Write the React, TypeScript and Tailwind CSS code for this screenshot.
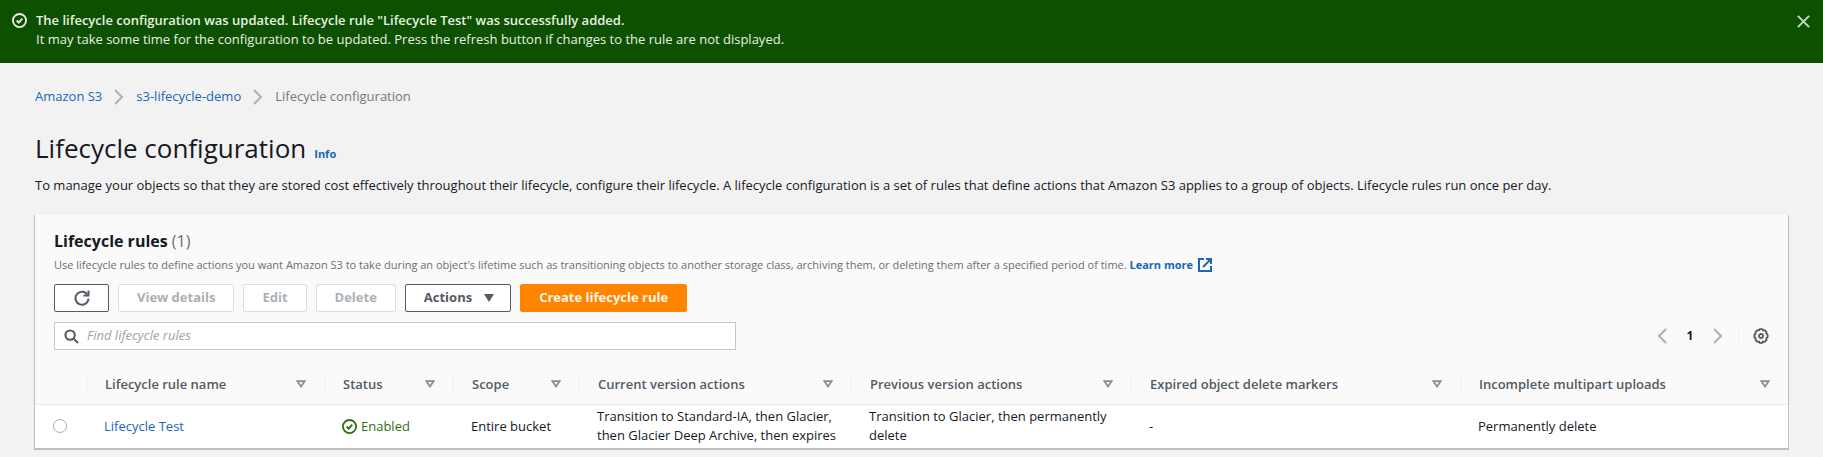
import React from "react";

type IconProps = { className?: string };

function CheckCircle({ className }: IconProps) {
  return (
    <svg viewBox="0 0 16 16" fill="none" stroke="currentColor" strokeWidth="2" className={className} aria-hidden="true">
      <circle cx="8" cy="8" r="7" />
      <path d="m5 8 2.2 2.2L11 6" />
    </svg>
  );
}

function Chevron({ className }: IconProps) {
  return (
    <svg viewBox="0 0 16 16" fill="none" stroke="currentColor" strokeWidth="2" className={className} aria-hidden="true">
      <path d="m4 1 7 7-7 7" />
    </svg>
  );
}

function CloseIcon({ className }: IconProps) {
  return (
    <svg viewBox="0 0 16 16" fill="none" stroke="currentColor" strokeWidth="2" className={className} aria-hidden="true">
      <path d="m2 2 12 12M14 2 2 14" />
    </svg>
  );
}

function RefreshIcon({ className }: IconProps) {
  return (
    <svg viewBox="0 0 16 16" fill="none" stroke="currentColor" strokeWidth="2" className={className} aria-hidden="true">
      <path d="M9.5 5.5h5V.5" />
      <path d="M14.5 8.5a6.5 6.5 0 1 1-1.2-4" />
    </svg>
  );
}

function SearchIcon({ className }: IconProps) {
  return (
    <svg viewBox="0 0 16 16" fill="none" stroke="currentColor" strokeWidth="2.2" className={className} aria-hidden="true">
      <circle cx="6.5" cy="6.5" r="5" />
      <path d="m15 15-5-5" />
    </svg>
  );
}

function ExternalIcon({ className }: IconProps) {
  return (
    <svg viewBox="0 0 16 16" fill="none" stroke="currentColor" strokeWidth="2" className={className} aria-hidden="true">
      <path d="M9 2h5v5" />
      <path d="m6 10 8-8" />
      <path d="M14 9v5H2V2h5" />
    </svg>
  );
}

function GearIcon({ className }: IconProps) {
  return (
    <svg viewBox="0 0 16 16" fill="none" stroke="currentColor" strokeLinejoin="round" className={className} aria-hidden="true">
      <path
        strokeWidth="1.8"
        d="M6.6 1.2h2.8l.6 1.2 1.6-.3 2 2-.4 1.5 1.4.9v2.9l-1.4.9.4 1.6-2 2-1.6-.4-.6 1.3H6.6L6 13.5l-1.6.4-2-2 .4-1.6-1.4-.9V6.5l1.4-.9-.4-1.5 2-2 1.6.3z"
      />
      <circle cx="8" cy="8" r="2" strokeWidth="1.8" />
    </svg>
  );
}

function SortIcon({ className }: IconProps) {
  return (
    <svg viewBox="0 0 10 8" fill="none" stroke="currentColor" strokeWidth="1.8" className={className} aria-hidden="true">
      <path d="M1.3 1.1h7.4L5 6.5z" />
    </svg>
  );
}

const columns = [
  { label: "Lifecycle rule name", width: "w-[238px]" },
  { label: "Status", width: "w-[129px]" },
  { label: "Scope", width: "w-[126px]" },
  { label: "Current version actions", width: "w-[272px]" },
  { label: "Previous version actions", width: "w-[280px]" },
  { label: "Expired object delete markers", width: "w-[329px]" },
  { label: "Incomplete multipart uploads", width: "" },
];

const buttonBase = "flex h-7 items-center justify-center rounded-xs border font-bold";

export default function App() {
  return (
    <div className="min-h-screen bg-[#f2f2f2] pb-2 font-['Open_Sans','Noto_Sans',sans-serif] text-[13px] text-[#16191f]">
      <div role="status" className="flex items-start bg-[#0d5000] px-3 pt-[11px] pb-[14px] leading-[19px] text-[#e8f0e4]">
        <CheckCircle className="mt-[2px] mr-[9px] size-[15px] shrink-0" />
        <div className="flex-1">
          <div className="font-semibold">
            The lifecycle configuration was updated. Lifecycle rule "Lifecycle Test" was successfully added.
          </div>
          <div>
            It may take some time for the configuration to be updated. Press the refresh button if changes to the rule
            are not displayed.
          </div>
        </div>
        <button type="button" aria-label="Dismiss" className="mt-[3px]">
          <CloseIcon className="size-[15px] text-[#c5dcc0]" />
        </button>
      </div>

      <main className="px-[35px]">
        <nav aria-label="Breadcrumbs" className="mt-6 flex h-5 items-center">
          <a href="#s3" className="text-[#1a66b8]">Amazon S3</a>
          <Chevron className="mx-[9px] size-4 text-[#aab0b3]" />
          <a href="#bucket" className="text-[#1a66b8]">s3-lifecycle-demo</a>
          <Chevron className="mx-[9px] size-4 text-[#aab0b3]" />
          <span className="text-[#75797c]">Lifecycle configuration</span>
        </nav>

        <div className="mt-[23px] flex items-baseline gap-2">
          <h1 className="text-[26px] leading-9">Lifecycle configuration</h1>
          <a href="#info" className="text-[11px] font-bold text-[#1a66b8]">Info</a>
        </div>
        <p className="mt-[9px] leading-5">
          To manage your objects so that they are stored cost effectively throughout their lifecycle, configure their
          lifecycle. A lifecycle configuration is a set of rules that define actions that Amazon S3 applies to a group
          of objects. Lifecycle rules run once per day.
        </p>

        <section className="-mx-px mt-5 border-r border-b-2 border-l border-[#bcbebf] bg-[#fafafa]">
          <div className="px-[19px] pt-[14px]">
            <h2 className="text-base leading-6 font-bold">
              Lifecycle rules <span className="font-normal text-[#687078]">(1)</span>
            </h2>
            <p className="mt-[2px] flex items-center text-[11px] leading-5 text-[#6b6f73]">
              <span>
                Use lifecycle rules to define actions you want Amazon S3 to take during an object's lifetime such as
                transitioning objects to another storage class, archiving them, or deleting them after a specified
                period of time.{" "}
                <a href="#learn" className="font-bold text-[#1a66b8]">Learn more</a>
              </span>
              <ExternalIcon className="ml-1 size-4 text-[#1a66b8]" />
            </p>

            <div className="mt-[9px] flex gap-[9px] text-[#545b64]">
              <button type="button" aria-label="Refresh" className={`${buttonBase} w-[55px] border-[#545b64] bg-white`}>
                <RefreshIcon className="size-4" />
              </button>
              <button type="button" disabled className={`${buttonBase} border-[#dcdedf] bg-white px-[18px] text-[#aab0b3]`}>View details</button>
              <button type="button" disabled className={`${buttonBase} border-[#dcdedf] bg-white px-[18px] text-[#aab0b3]`}>Edit</button>
              <button type="button" disabled className={`${buttonBase} border-[#dcdedf] bg-white px-[18px] text-[#aab0b3]`}>Delete</button>
              <button type="button" className={`${buttonBase} gap-3 border-[#545b64] bg-white pr-4 pl-[18px]`}>
                Actions
                <svg viewBox="0 0 10 8" className="h-2 w-[10px]" fill="currentColor" aria-hidden="true">
                  <path d="M0 0h10L5 8z" />
                </svg>
              </button>
              <button type="button" className={`${buttonBase} border-[#ff8400] bg-[#ff8400] px-[18px] text-[#fff6e8]`}>Create lifecycle rule</button>
            </div>

            <div className="mt-[10px] flex items-center justify-between">
              <label className="flex h-7 w-[682px] items-center border border-[#c3c6c8] bg-white px-[9px]">
                <SearchIcon className="mr-2 size-[15px] shrink-0 text-[#545b64]" />
                <input
                  type="search"
                  aria-label="Find lifecycle rules"
                  placeholder="Find lifecycle rules"
                  className="w-full bg-transparent outline-none placeholder:text-[#9da3a7] placeholder:italic"
                />
              </label>
              <div className="flex items-center">
                <button type="button" aria-label="Previous page" className="text-[#aab0b3]">
                  <Chevron className="size-4 rotate-180" />
                </button>
                <button type="button" className="w-10 text-xs font-bold">1</button>
                <button type="button" aria-label="Next page" className="text-[#aab0b3]">
                  <Chevron className="size-4" />
                </button>
                <span className="mr-[14px] ml-3 h-6 w-px bg-[#f2f3f3]" />
                <button type="button" aria-label="Preferences" className="text-[#545b64]">
                  <GearIcon className="size-4" />
                </button>
              </div>
            </div>
          </div>

          <table className="mt-[14px] w-full table-fixed text-left leading-[19px]">
            <thead>
              <tr className="h-10 border-b border-[#eaeded] text-[#545b64]">
                <th className="w-[51px]" />
                {columns.map((column) => (
                  <th key={column.label} scope="col" className={`${column.width} p-0`}>
                    <div className="flex items-center justify-between border-l border-[#eeefef] px-[18px] pt-px">
                      <span className="font-semibold">{column.label}</span>
                      <button type="button" aria-label={`Sort by ${column.label}`} className="text-[#879096]">
                        <SortIcon className="h-2 w-[10px]" />
                      </button>
                    </div>
                  </th>
                ))}
              </tr>
            </thead>
            <tbody className="bg-white">
              <tr className="h-11">
                <td className="p-0 pl-[18px]">
                  <input
                    type="radio"
                    name="rule"
                    aria-label="Select Lifecycle Test"
                    className="block size-[14px] appearance-none rounded-full border border-[#aab0b3] bg-white"
                  />
                </td>
                <td className="p-0 pl-[18px]"><a href="#rule" className="text-[#1a66b8]">Lifecycle Test</a></td>
                <td className="p-0 pl-[18px]">
                  <span className="flex items-center gap-1 text-[#2f7010]">
                    <CheckCircle className="size-[15px] shrink-0" />
                    Enabled
                  </span>
                </td>
                <td className="p-0 pl-[18px]">Entire bucket</td>
                <td className="p-0 pl-[18px]">Transition to Standard-IA, then Glacier, then Glacier Deep Archive, then expires</td>
                <td className="p-0 pr-[18px] pl-[18px]">Transition to Glacier, then permanently delete</td>
                <td className="p-0 pl-[18px]">-</td>
                <td className="p-0 pl-[18px]">Permanently delete</td>
              </tr>
            </tbody>
          </table>
        </section>
      </main>
    </div>
  );
}
